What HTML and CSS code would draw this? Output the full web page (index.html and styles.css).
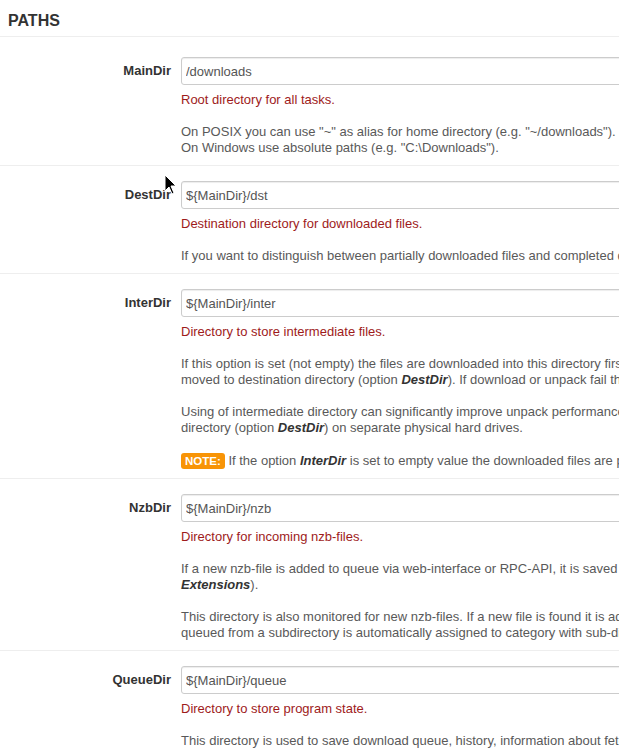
FILE: index.html
```html
<!DOCTYPE html>
<html lang="en">
<head>
  <meta charset="UTF-8" />
  <title>Settings - Paths</title>
  <link rel="stylesheet" href="styles.css">
</head>
<body>

  <div class="section">
    <h4 class="section-title">PATHS</h4>

    <!-- MainDir -->
    <div class="option">
      <label class="option-label">MainDir</label>
      <div class="controls">
        <input class="option-input" type="text" value="/downloads">
        <p class="desc">Root directory for all tasks.</p>
        <p class="help">On POSIX you can use "~" as alias for home directory (e.g. "~/downloads").<br>On Windows use absolute paths (e.g. "C:\Downloads").</p>
      </div>
    </div>

    <!-- DestDir -->
    <div class="option">
      <label class="option-label">DestDir</label>
      <div class="controls">
        <input class="option-input" type="text" value="${MainDir}/dst">
        <p class="desc">Destination directory for downloaded files.</p>
        <p class="help">If you want to distinguish between partially downloaded files and completed downloads, use also option <strong><em>InterDir</em></strong>.</p>
      </div>
    </div>

    <!-- InterDir -->
    <div class="option">
      <label class="option-label">InterDir</label>
      <div class="controls">
        <input class="option-input" type="text" value="${MainDir}/inter">
        <p class="desc">Directory to store intermediate files.</p>
        <p class="help">If this option is set (not empty) the files are downloaded into this directory first and after successful download of nzb-file (or unpack, if enabled) are<br>moved to destination directory (option <strong><em>DestDir</em></strong>). If download or unpack fail the files remain in intermediate directory.</p>
        <p class="help">Using of intermediate directory can significantly improve unpack performance if you can put intermediate directory (option <strong><em>InterDir</em></strong>) and destination<br>directory (option <strong><em>DestDir</em></strong>) on separate physical hard drives.</p>
        <p class="help note-line"><span class="note">NOTE:</span> If the option <strong><em>InterDir</em></strong> is set to empty value the downloaded files are put directly to destination directory (option <strong><em>DestDir</em></strong>).</p>
      </div>
    </div>

    <!-- NzbDir -->
    <div class="option">
      <label class="option-label">NzbDir</label>
      <div class="controls">
        <input class="option-input" type="text" value="${MainDir}/nzb">
        <p class="desc">Directory for incoming nzb-files.</p>
        <p class="help">If a new nzb-file is added to queue via web-interface or RPC-API, it is saved into this directory and then processed by extension scripts (option<br><strong><em>Extensions</em></strong>).</p>
        <p class="help">This directory is also monitored for new nzb-files. If a new file is found it is added to download queue. The directory can have sub-directories. A nzb-file<br>queued from a subdirectory is automatically assigned to category with sub-directory-name.</p>
      </div>
    </div>

    <!-- QueueDir -->
    <div class="option">
      <label class="option-label">QueueDir</label>
      <div class="controls">
        <input class="option-input" type="text" value="${MainDir}/queue">
        <p class="desc">Directory to store program state.</p>
        <p class="help">This directory is used to save download queue, history, information about fetched RSS feeds, statistics, etc.</p>
      </div>
    </div>
  </div>

  <!-- mouse pointer captured in the screenshot -->
  <svg class="pointer" width="14" height="22" viewBox="0 0 14 22">
    <path d="M1 1 L1 17 L5 13 L8 20 L10 19 L7 12 L12 12 Z" fill="#000" stroke="#fff" stroke-width="1"/>
  </svg>

</body>
</html>
```

FILE: styles.css
```css
body {
  margin: 0;
  font-family: "Liberation Sans", Arial, sans-serif;
  font-size: 13px;
  line-height: 16px;
  color: #333;
  background: #fff;
  overflow: hidden;
}

.section {
  width: 1200px;
}

.section-title {
  margin: 0;
  padding: 11px 8px 5px;
  font-size: 16px;
  line-height: 20px;
  font-weight: bold;
  color: #333;
}

.option {
  display: flex;
  border-top: 1px solid #eee;
  padding: 15px 0 9px;
}

.section-title + .option {
  padding-top: 20px;
}

.option-label {
  flex: 0 0 171px;
  text-align: right;
  font-weight: bold;
  padding-top: 6px;
  color: #333;
}

.controls {
  margin-left: 10px;
  flex: 1;
  white-space: nowrap;
}

.option-input {
  display: block;
  box-sizing: border-box;
  width: 900px;
  height: 28px;
  margin: 0;
  padding: 4px;
  font-family: "Liberation Sans", Arial, sans-serif;
  font-size: 13px;
  color: #555;
  border: 1px solid #ccc;
  border-radius: 3px;
  box-shadow: inset 0 1px 1px rgba(0, 0, 0, 0.075);
}

.desc,
.help {
  margin: 16px 0 0;
  color: #595959;
}

.desc {
  margin-top: 7px;
  color: #9e1b1b;
}

.help strong {
  color: #333;
}

.note-line {
  line-height: 17px;
}

.note {
  display: inline-block;
  padding: 0 4px;
  line-height: 16px;
  font-size: 11.5px;
  font-weight: bold;
  color: #fff;
  background: #f89406;
  border-radius: 3px;
}

.pointer {
  position: absolute;
  left: 164px;
  top: 174px;
}
```
